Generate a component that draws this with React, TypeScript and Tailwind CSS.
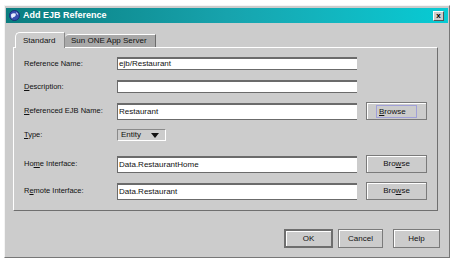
import { ReactNode } from 'react'

const font = { fontFamily: '"Liberation Sans", Arial, sans-serif' }

function Mn({ text, at }: { text: string; at: number }) {
  if (at < 0) return <>{text}</>
  return (
    <>
      {text.slice(0, at)}
      <span className="underline underline-offset-1">{text[at]}</span>
      {text.slice(at + 1)}
    </>
  )
}

function Input({ value, h }: { value: string; h: string }) {
  return (
    <div
      className={`w-[240px] ${h} bg-white border-t-2 border-l border-b border-[#6b6b6b] flex items-center pl-[1px] text-[8px] text-[#111]`}
    >
      {value}
    </div>
  )
}

function BrowseButton({ at, focus }: { at: number; focus?: boolean }) {
  return (
    <div className="ml-[9px] w-[61px] h-[18px] border border-[#7a7a7a] bg-[#cccccc] shadow-[inset_1px_1px_0_#ffffff] flex items-center justify-center text-[8px] text-[#111]">
      <span className={`px-[2px] ${focus ? 'outline outline-[#a0a0d8] w-[39px] h-[11px] leading-[11px]' : ''}`}>
        <Mn text="Browse" at={at} />
      </span>
    </div>
  )
}

function Row({ label, children, className }: { label: ReactNode; children: ReactNode; className: string }) {
  return (
    <div className={`flex items-center ${className}`}>
      <div className="w-[93px] text-[7.5px] text-[#111]">{label}</div>
      {children}
    </div>
  )
}

function DialogButton({ label, w, isDefault }: { label: string; w: string; isDefault?: boolean }) {
  return (
    <div
      className={`${w} h-[19px] flex items-center justify-center text-[8px] text-[#111] bg-[#cccccc] ${
        isDefault
          ? 'border-2 border-[#6e6e6e] shadow-[inset_1px_1px_0_#ffffff]'
          : 'border border-[#7a7a7a] shadow-[inset_1px_1px_0_#ffffff]'
      }`}
    >
      {label}
    </div>
  )
}

export default function App() {
  return (
    <div className="w-[455px] h-[264px] bg-white overflow-hidden" style={font}>
      <div className="ml-[4px] mt-[5px] w-[446px] h-[253px] bg-[#cccccc] border-t border-l border-[#f4f4f4] border-r border-b border-r-[#777777] border-b-[#777777] p-[1px] flex flex-col">
        {/* Title bar */}
        <div className="h-[15px] mt-[1px] bg-linear-to-r from-[#0a7d7f] via-[#17a3ad] to-[#06cbd4] flex items-center pl-[3px] pr-[3px]">
          <svg width="11" height="11" viewBox="0 0 11 11">
            <circle cx="5.5" cy="5.5" r="5" fill="#3a4fb0" stroke="#1b2570" strokeWidth="0.8" />
            <path d="M2 4.5 Q4 2.5 6.5 3.5 Q7.5 5 6 6.5 Q4 7 3 8.5 Q1.8 6.5 2 4.5Z" fill="#e8ecff" />
            <path d="M7 2 Q9 3 9.3 5 Q8.2 4.6 7.6 3.4Z" fill="#e8ecff" />
          </svg>
          <span className="ml-[3px] text-white font-bold text-[9px]">Add EJB Reference</span>
          <div className="ml-auto mr-[1px] w-[11px] h-[10px] bg-[#cccccc] border border-t-white border-l-white border-r-[#555] border-b-[#555] flex items-center justify-center text-[8px] leading-none font-bold text-black">
            x
          </div>
        </div>

        {/* Body */}
        <div className="px-[7px] pt-[9px] flex flex-col">
          {/* Tabs */}
          <div className="flex items-end h-[15px] ml-[2px] relative z-10">
            <div className="w-[50px] h-[16px] -mb-px bg-[#cccccc] border-t border-l border-white rounded-tl-[5px] border-r border-r-[#888] flex items-center pl-[7px] text-[8px] text-[#111]">
              Standard
            </div>
            <div className="w-[91px] h-[13px] bg-[#a9a9a9] border-t border-t-white border-r border-r-[#6b6b6b] rounded-tl-[4px] flex items-center pl-[6px] text-[8px] text-[#111]">
              Sun ONE App Server
            </div>
          </div>

          {/* Panel */}
          <div className="w-[425px] h-[164px] border-t border-l border-white border-r border-b border-r-[#6f6f6f] border-b-[#6f6f6f] pl-[10px] flex flex-col">
            <Row label="Reference Name:" className="mt-[9px]">
              <Input value="ejb/Restaurant" h="h-[13px]" />
            </Row>
            <Row label={<Mn text="Description:" at={0} />} className="mt-[10px]">
              <Input value="" h="h-[13px]" />
            </Row>
            <Row label={<Mn text="Referenced EJB Name:" at={0} />} className="mt-[9px]">
              <Input value="Restaurant" h="h-[17px]" />
              <BrowseButton at={0} focus />
            </Row>
            <Row label={<Mn text="Type:" at={0} />} className="mt-[9px]">
              <div className="w-[49px] h-[12px] border border-[#8a8a8a] border-b-white border-r-white flex items-center pl-[3px] text-[8px] text-[#111]">
                Entity
                <svg className="ml-auto mr-[6px]" width="8" height="5" viewBox="0 0 8 5">
                  <path d="M0 0H8L4 5Z" fill="#111" />
                </svg>
              </div>
            </Row>
            <Row label={<Mn text="Home Interface:" at={2} />} className="mt-[14px]">
              <Input value="Data.RestaurantHome" h="h-[17px]" />
              <BrowseButton at={3} />
            </Row>
            <Row label={<Mn text="Remote Interface:" at={1} />} className="mt-[9px]">
              <Input value="Data.Restaurant" h="h-[17px]" />
              <BrowseButton at={3} />
            </Row>
          </div>

          {/* Dialog buttons */}
          <div className="flex justify-end mt-[18px] pr-[1px]">
            <DialogButton label="OK" w="w-[49px]" isDefault />
            <div className="ml-[5px]">
              <DialogButton label="Cancel" w="w-[45px]" />
            </div>
            <div className="ml-[10px]">
              <DialogButton label="Help" w="w-[47px]" />
            </div>
          </div>
        </div>
      </div>
    </div>
  )
}
